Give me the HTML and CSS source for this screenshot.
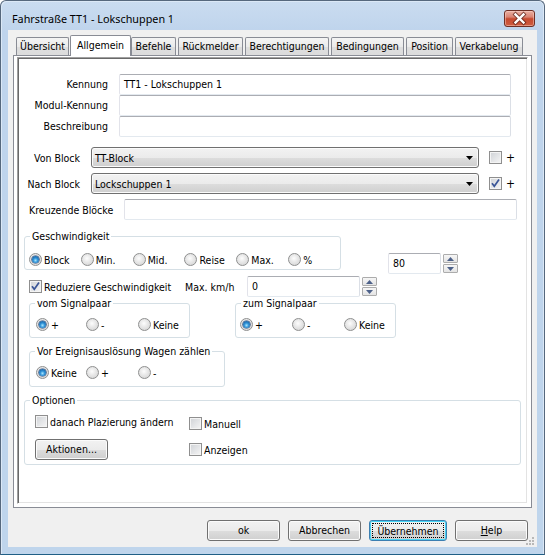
FILE: index.html
```html
<!DOCTYPE html>
<html lang="de">
<head>
<meta charset="utf-8">
<title>Fahrstraße TT1 - Lokschuppen 1</title>
<link rel="stylesheet" href="styles.css">
</head>
<body>
<div class="window">
  <div class="titlebar">
    <span class="title">Fahrstraße TT1 - Lokschuppen 1</span>
    <span class="close">
      <svg width="31" height="17" viewBox="0 0 31 17">
        <path d="M11.5 4.5 L19.5 12.5 M19.5 4.5 L11.5 12.5" stroke="#5a2219" stroke-opacity="0.75" stroke-width="4.2" stroke-linecap="square" fill="none"/>
        <path d="M11.5 4.5 L19.5 12.5 M19.5 4.5 L11.5 12.5" stroke="#ffffff" stroke-width="2.4" stroke-linecap="square" fill="none"/>
      </svg>
    </span>
  </div>
  <div class="client">
    <div class="tabstrip">
      <div class="tab w-uebersicht">Übersicht</div>
      <div class="tab active w-allgemein">Allgemein</div>
      <div class="tab w-befehle">Befehle</div>
      <div class="tab w-rueck">Rückmelder</div>
      <div class="tab w-berecht">Berechtigungen</div>
      <div class="tab w-beding">Bedingungen</div>
      <div class="tab w-position">Position</div>
      <div class="tab w-verkab">Verkabelung</div>
    </div>
    <div class="page">
      <div class="panel">
        <div class="fields">
          <label class="flabel">Kennung</label>
          <div class="tb">TT1 - Lokschuppen 1</div>
          <label class="flabel">Modul-Kennung</label>
          <div class="tb"></div>
          <label class="flabel">Beschreibung</label>
          <div class="tb"></div>
        </div>

        <div class="blockrow first">
          <span class="blabel">Von Block</span>
          <div class="combo"><span class="combo-text">TT-Block</span><svg class="arrow" width="7" height="4" viewBox="0 0 7 4"><path d="M0 0H7L3.5 4Z" fill="#000"/></svg></div>
          <span class="cb"></span><span class="plus">+</span>
        </div>
        <div class="blockrow">
          <span class="blabel">Nach Block</span>
          <div class="combo"><span class="combo-text">Lockschuppen 1</span><svg class="arrow" width="7" height="4" viewBox="0 0 7 4"><path d="M0 0H7L3.5 4Z" fill="#000"/></svg></div>
          <span class="cb checked"><svg width="11" height="11" viewBox="0 0 11 11"><path d="M2 5.2 L4.3 8.3 L9 1.6" stroke="#3a5597" stroke-width="1.7" fill="none"/></svg></span><span class="plus">+</span>
        </div>

        <div class="kreuzrow">
          <span class="klabel">Kreuzende Blöcke</span>
          <div class="tb wide"></div>
        </div>

        <div class="speedrow">
          <fieldset class="group g-speed">
            <legend>Geschwindigkeit</legend>
            <div class="gin speed-in">
              <span class="opt w52"><span class="rb on"></span>Block</span>
              <span class="opt w52"><span class="rb"></span>Min.</span>
              <span class="opt w52"><span class="rb"></span>Mid.</span>
              <span class="opt w52"><span class="rb"></span>Reise</span>
              <span class="opt w52"><span class="rb"></span>Max.</span>
              <span class="opt w52"><span class="rb"></span>%</span>
            </div>
          </fieldset>
          <div class="spin spin80">
            <div class="tb num n80">80</div>
            <div class="spinbtns">
              <span class="sbtn"><svg width="7" height="4" viewBox="0 0 7 4"><path d="M0 4H7L3.5 0Z" fill="#4d6189"/></svg></span>
              <span class="sbtn"><svg width="7" height="4" viewBox="0 0 7 4"><path d="M0 0H7L3.5 4Z" fill="#4d6189"/></svg></span>
            </div>
          </div>
        </div>

        <div class="reducerow">
          <span class="chk w156"><span class="cb checked"><svg width="11" height="11" viewBox="0 0 11 11"><path d="M2 5.2 L4.3 8.3 L9 1.6" stroke="#3a5597" stroke-width="1.7" fill="none"/></svg></span>Reduziere Geschwindigkeit</span>
          <span class="kmh">Max. km/h</span>
          <div class="spin">
            <div class="tb num n0">0</div>
            <div class="spinbtns">
              <span class="sbtn"><svg width="7" height="4" viewBox="0 0 7 4"><path d="M0 4H7L3.5 0Z" fill="#4d6189"/></svg></span>
              <span class="sbtn"><svg width="7" height="4" viewBox="0 0 7 4"><path d="M0 0H7L3.5 4Z" fill="#4d6189"/></svg></span>
            </div>
          </div>
        </div>

        <div class="signalrow">
          <fieldset class="group g-vom">
            <legend>vom Signalpaar</legend>
            <div class="gin sig-in">
              <span class="opt w50"><span class="rb on"></span>+</span>
              <span class="opt w52"><span class="rb"></span>-</span>
              <span class="opt"><span class="rb"></span>Keine</span>
            </div>
          </fieldset>
          <fieldset class="group g-zum">
            <legend>zum Signalpaar</legend>
            <div class="gin zum-in">
              <span class="opt w52"><span class="rb on"></span>+</span>
              <span class="opt w52"><span class="rb"></span>-</span>
              <span class="opt"><span class="rb"></span>Keine</span>
            </div>
          </fieldset>
        </div>

        <fieldset class="group g-ereignis">
          <legend>Vor Ereignisauslösung Wagen zählen</legend>
          <div class="gin ereig-in">
            <span class="opt w50"><span class="rb on"></span>Keine</span>
            <span class="opt w52"><span class="rb"></span>+</span>
            <span class="opt"><span class="rb"></span>-</span>
          </div>
        </fieldset>

        <fieldset class="group g-optionen">
          <legend>Optionen</legend>
          <div class="gin opt-in">
            <div class="ocol1">
              <span class="chk"><span class="cb"></span>danach Plazierung ändern</span>
              <button class="btn aktionen">Aktionen...</button>
            </div>
            <div class="ocol2">
              <span class="chk"><span class="cb"></span>Manuell</span>
              <span class="chk anz"><span class="cb"></span>Anzeigen</span>
            </div>
          </div>
        </fieldset>
      </div>
    </div>
    <div class="buttons">
      <button class="btn b73">ok</button>
      <button class="btn b73">Abbrechen</button>
      <button class="btn b78 default"><span class="focus">Übernehmen</span></button>
      <button class="btn b73"><u>H</u>elp</button>
    </div>
    <svg class="grip" width="8" height="8" viewBox="0 0 8 8">
      <g fill="#b8b8b8">
        <rect x="6" y="0" width="2" height="2"/>
        <rect x="3" y="3" width="2" height="2"/><rect x="6" y="3" width="2" height="2"/>
        <rect x="0" y="6" width="2" height="2"/><rect x="3" y="6" width="2" height="2"/><rect x="6" y="6" width="2" height="2"/>
      </g>
    </svg>
  </div>
</div>
</body>
</html>
```

FILE: styles.css
```css
html, body {
  margin: 0;
  padding: 0;
  background: #ffffff;
}
body {
  font-family: "DejaVu Sans Condensed", "DejaVu Sans", sans-serif;
  font-size: 10.5px;
  color: #000;
}
.window {
  width: 545px;
  height: 555px;
  box-sizing: border-box;
  border: 1px solid #56687d;
  border-bottom-color: #1f5f86;
  border-radius: 6px 6px 0 0;
  background: linear-gradient(#cadcf0 0, #bfd4ec 30px, #bfd5ec 100%);
  box-shadow: inset 1px 1px 0 #dbe8f6, inset -1px 0 0 #dbe8f6;
  display: flex;
  flex-direction: column;
}
.titlebar {
  height: 29px;
  box-sizing: border-box;
  padding: 6px 9px 0 11px;
  display: flex;
  align-items: center;
  justify-content: space-between;
}
.title {
  font-family: "Noto Sans", "Open Sans", sans-serif;
  font-size: 10.8px;
  color: #000;
  line-height: 17px;
}
.close {
  width: 31px;
  height: 17px;
  box-sizing: border-box;
  border: 1px solid #6e2f25;
  border-radius: 3px;
  background: linear-gradient(#eab0a3 0, #d98474 40%, #c64a30 52%, #cf5d40 100%);
  box-shadow: inset 0 0 0 1px rgba(255, 220, 210, 0.45);
  display: block;
  overflow: hidden;
}
.close svg {
  display: block;
  margin: -1px 0 0 -1px;
}
.client {
  position: relative;
  margin: 0 7px;
  height: 517px;
  background: #f0f0f0;
  display: flex;
  flex-direction: column;
}
.tabstrip {
  height: 25px;
  box-sizing: border-box;
  padding-left: 8px;
  display: flex;
  align-items: flex-end;
  gap: 2px;
  position: relative;
  z-index: 1;
}
.tab {
  height: 18px;
  box-sizing: border-box;
  border: 1px solid #898c95;
  border-bottom: none;
  border-radius: 2px 2px 0 0;
  background: linear-gradient(#f4f4f4, #ebebeb 50%, #dedede 51%, #dcdcdc);
  text-align: center;
  line-height: 17px;
  white-space: nowrap;
}
.tab.active {
  height: 21px;
  margin: 0 -2px -1px -1px;
  background: #fff;
  line-height: 18px;
}
.w-uebersicht { width: 53px; }
.w-allgemein { width: 61px; }
.w-befehle { width: 45px; }
.w-rueck { width: 65px; }
.w-berecht { width: 84px; }
.w-beding { width: 73px; }
.w-position { width: 47px; }
.w-verkab { width: 68px; }

.page {
  margin: 0 5px;
  height: 453px;
  box-sizing: border-box;
  border: 1px solid #898c95;
  background: #fff;
  padding: 1px 3px 3px 3px;
}
.panel {
  height: 100%;
  box-sizing: border-box;
  border: 1px solid;
  border-color: #a0a0a0 #ffffff #ffffff #a0a0a0;
  box-shadow: inset 1px 1px 0 #696969, inset -1px -1px 0 #e3e3e3;
  padding: 1px;
  background: #fff;
}

/* text boxes */
.tb {
  height: 21px;
  box-sizing: border-box;
  border: 1px solid;
  border-color: #abadb3 #dbdfe6 #e3e9ef #e2e3ea;
  border-radius: 2px;
  background: #fff;
  padding: 0 4px;
  line-height: 19px;
  white-space: nowrap;
}
.fields {
  margin-top: 15px;
  display: grid;
  grid-template-columns: 89px 392px;
  grid-auto-rows: 21px;
  column-gap: 11px;
}
.flabel {
  text-align: right;
  line-height: 21px;
  white-space: nowrap;
}

/* combo rows */
.blockrow {
  display: flex;
  align-items: center;
  height: 21px;
  margin-top: 5px;
}
.blockrow.first {
  margin-top: 10px;
}
.blabel {
  width: 61px;
  text-align: right;
  white-space: nowrap;
}
.combo {
  margin-left: 11px;
  width: 388px;
  height: 21px;
  box-sizing: border-box;
  border: 1px solid #707070;
  border-radius: 3px;
  background: linear-gradient(#f2f2f2 0, #ebebeb 50%, #dddddd 51%, #cfcfcf 100%);
  box-shadow: inset 0 0 0 1px #fbfbfb;
  display: flex;
  align-items: center;
  padding: 0 5px 0 3px;
}
.combo-text {
  flex: 1;
}
.arrow {
  display: block;
}
.cb {
  width: 13px;
  height: 13px;
  box-sizing: border-box;
  border: 1px solid #8f8f8f;
  background: linear-gradient(135deg, #cfd2d6, #f6f6f6);
  box-shadow: inset 0 0 0 1px #f4f4f4;
  display: inline-block;
  flex: none;
}
.cb svg {
  display: block;
}
.blockrow .cb {
  margin-left: 10px;
}
.plus {
  margin-left: 4px;
  font-size: 12px;
}

.kreuzrow {
  margin-top: 5px;
  display: flex;
  align-items: center;
  padding-left: 10px;
  height: 21px;
}
.klabel {
  width: 84px;
  flex: none;
  white-space: nowrap;
}
.tb.wide {
  margin-left: 11px;
  width: 393px;
  flex: none;
}

/* group boxes */
.group {
  margin: 0;
  padding: 0;
  min-width: 0;
  border: 1px solid #d5dfe5;
  border-radius: 3px;
  box-sizing: border-box;
}
.group legend {
  padding: 0 2px;
  margin-left: 5px;
  line-height: 12px;
  white-space: nowrap;
}
.gin {
  display: flex;
  align-items: center;
}
.opt {
  display: flex;
  align-items: center;
  height: 13px;
  white-space: nowrap;
}
.opt .rb {
  margin-right: 2px;
}
.w52 { width: 52px; }
.w50 { width: 50px; }
.rb {
  width: 13px;
  height: 13px;
  box-sizing: border-box;
  border-radius: 50%;
  border: 1px solid #8e8f8f;
  background: radial-gradient(circle at 45% 40%, #fdfdfd 0, #e9e9e9 40%, #cfcfcf 100%);
  flex: none;
  display: inline-block;
}
.rb.on::after {
  content: "";
  display: block;
  width: 7px;
  height: 7px;
  margin: 2px;
  border-radius: 50%;
  background: radial-gradient(circle at 50% 62%, #a6e6ff 0, #2f91d6 40%, #0d4a8a 100%);
  box-shadow: 0 0 0 0.6px #1f3f70;
}

.speedrow {
  display: flex;
  align-items: flex-start;
  margin-top: 10px;
  padding-left: 5px;
}
.g-speed {
  width: 317px;
}
.speed-in {
  padding: 11px 0 3px 4px;
}
.spin {
  display: flex;
  gap: 2px;
}
.spin80 {
  margin: 23px 0 0 47px;
}
.tb.num {
  padding-left: 4px;
}
.n80 { width: 53px; }
.n0 { width: 113px; }
.spinbtns {
  display: flex;
  flex-direction: column;
  gap: 1px;
  padding-top: 1px;
}
.sbtn {
  width: 15px;
  height: 9px;
  box-sizing: border-box;
  border: 1px solid #acacac;
  border-radius: 1px;
  background: linear-gradient(#f6f6f6, #e4e4e4);
  display: flex;
  align-items: center;
  justify-content: center;
}
.sbtn svg {
  display: block;
}

.reducerow {
  margin-top: 2px;
  display: flex;
  align-items: center;
  padding-left: 10px;
  height: 21px;
}
.chk {
  display: flex;
  align-items: center;
  height: 13px;
  white-space: nowrap;
}
.chk .cb {
  margin-right: 2px;
}
.w156 { width: 156px; }
.kmh { width: 62px; white-space: nowrap; }

.signalrow {
  display: flex;
  margin-top: 0;
  padding-left: 10px;
  gap: 45px;
}
.g-vom { width: 161px; }
.g-zum { width: 161px; }
.sig-in { padding: 9px 0 6px 6px; }
.zum-in { padding: 9px 0 6px 4px; }

.g-ereignis {
  margin: 7px 0 0 10px;
  width: 196px;
}
.ereig-in { padding: 9px 0 7px 6px; }

.g-optionen {
  margin: 7px 0 0 5px;
  width: 497px;
}
.opt-in {
  align-items: flex-start;
  padding: 9px 0 4px 10px;
}
.ocol1 {
  width: 154px;
  display: flex;
  flex-direction: column;
  align-items: flex-start;
}
.ocol2 {
  display: flex;
  flex-direction: column;
  padding-top: 2px;
}
.anz { margin-top: 13px; }

/* buttons */
.btn {
  font: inherit;
  color: #000;
  height: 21px;
  box-sizing: border-box;
  border: 1px solid #707070;
  border-radius: 3px;
  background: linear-gradient(#f2f2f2 0, #ebebeb 50%, #dddddd 51%, #cfcfcf 100%);
  box-shadow: inset 0 0 0 1px #fbfbfb;
  padding: 0;
  line-height: 19px;
}
.aktionen {
  margin-top: 11px;
  width: 73px;
}
.buttons {
  margin-top: 12px;
  display: flex;
  justify-content: flex-end;
  gap: 8px;
  padding-right: 9px;
}
.b73 { width: 73px; }
.b78 { width: 78px; }
.btn.default {
  border-color: #3c7fb1;
  box-shadow: inset 0 0 0 1px #48d4f4;
  padding: 2px;
}
.focus {
  display: block;
  height: 15px;
  line-height: 14px;
  border: 1px dotted #000;
  box-sizing: border-box;
}
.grip {
  position: absolute;
  right: 3px;
  bottom: 2px;
}
```
